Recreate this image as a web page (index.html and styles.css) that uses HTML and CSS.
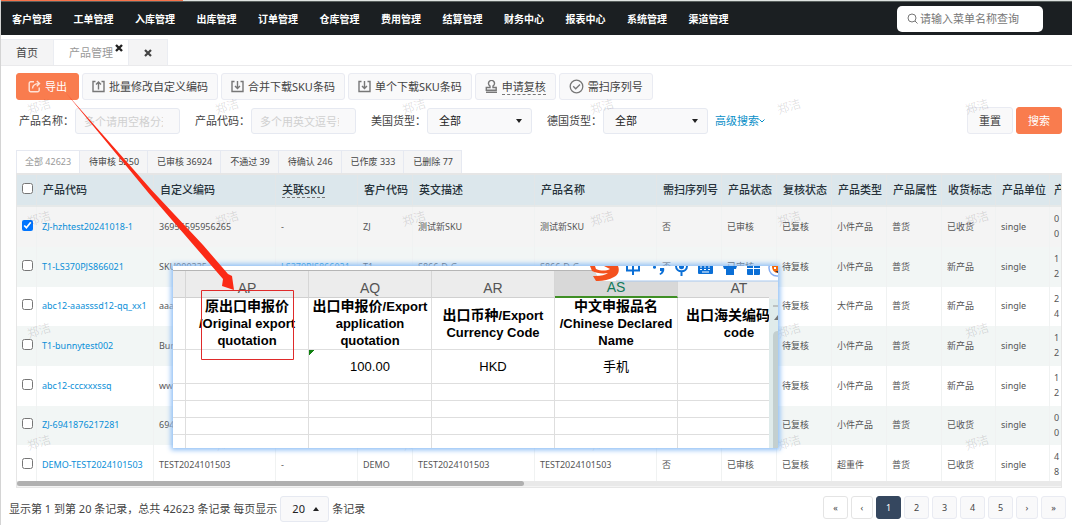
FILE: index.html
```html
<!DOCTYPE html>
<html lang="zh-CN">
<head>
<meta charset="utf-8">
<title>产品管理</title>
<link rel="stylesheet" href="styles.css">
</head>
<body>
<div class="page">
  <div class="progress"><div class="progress-bar"></div></div>
  <header class="topbar">
    <nav class="menu">
      <a href="#">客户管理</a><a href="#">工单管理</a><a href="#">入库管理</a><a href="#">出库管理</a><a href="#">订单管理</a><a href="#">仓库管理</a><a href="#">费用管理</a><a href="#">结算管理</a><a href="#">财务中心</a><a href="#">报表中心</a><a href="#">系统管理</a><a href="#">渠道管理</a>
    </nav>
    <label class="menu-search">
      <svg width="11" height="11" viewBox="0 0 11 11" fill="none" stroke="#777"><circle cx="5" cy="5" r="4"/><path d="M8 8l2.5 2.5"/></svg>
      <input type="text" placeholder="请输入菜单名称查询" aria-label="请输入菜单名称查询">
    </label>
  </header>

  <div class="tabs">
    <button class="tab">首页</button>
    <button class="tab tab-active">产品管理<svg class="tab-close" width="8" height="8" viewBox="0 0 8 8" stroke="#222" stroke-width="2.4"><path d="M1 1l6 6M7 1l-6 6"/></svg></button>
    <button class="tab" aria-label="close"><svg width="8" height="8" viewBox="0 0 8 8" stroke="#444" stroke-width="2.2"><path d="M1 1l6 6M7 1l-6 6"/></svg></button>
  </div>

  <main class="content">
    <div class="toolbar">
      <button class="btn btn-primary btn-export"><svg width="13" height="13" viewBox="0 0 13 13" fill="none" stroke="#ffe3d8" stroke-width="1.4"><path d="M6 1.7H2.7a1.5 1.5 0 0 0-1.5 1.5v7a1.5 1.5 0 0 0 1.5 1.5h7a1.5 1.5 0 0 0 1.5-1.5V7.5M4.5 8.5C4.7 5.5 6.5 3.6 11 3.6M8.8 1l2.7 2.6-2.7 2.6"/></svg>导出</button>
      <button class="btn"><svg width="13" height="13" viewBox="0 0 13 13" fill="none" stroke="#777" stroke-width="1.4"><path d="M3.5 1.5H1v10h11v-10H9.5M6.5 9.5V2M4 4.5L6.5 2 9 4.5"/></svg>批量修改自定义编码</button>
      <button class="btn"><svg width="13" height="13" viewBox="0 0 13 13" fill="none" stroke="#777" stroke-width="1.4"><path d="M3.5 1.5H1v10h11v-10H9.5M6.5 1v7.5M4 6l2.5 2.5L9 6"/></svg>合并下载SKU条码</button>
      <button class="btn"><svg width="13" height="13" viewBox="0 0 13 13" fill="none" stroke="#777" stroke-width="1.4"><path d="M3.5 1.5H1v10h11v-10H9.5M6.5 1v7.5M4 6l2.5 2.5L9 6"/></svg>单个下载SKU条码</button>
      <button class="btn"><svg width="13" height="13" viewBox="0 0 13 13" fill="none" stroke="#777" stroke-width="1.4"><path d="M5 7.5V6a3 3 0 1 1 3 0v1.5h3.200v2.700H1.300V7.500zM1 12.200h11"/></svg><span class="hinted">申请复核</span></button>
      <button class="btn"><svg width="15" height="15" viewBox="0 0 15 15" fill="none" stroke="#777" stroke-width="1.3"><circle cx="7.5" cy="7.5" r="6.3"/><path d="M4.200 7.300l2.500 2.500 4.300-4.300"/></svg>需扫序列号</button>
    </div>

    <form class="filters">
      <div class="field"><label for="pname">产品名称：</label><input id="pname" class="box" type="text" placeholder="多个请用空格分开"></div>
      <div class="field"><label for="pcode">产品代码：</label><input id="pcode" class="box" type="text" placeholder="多个用英文逗号或空格"></div>
      <div class="field"><label for="us">美国货型：</label><span class="picker"><select id="us" class="box"><option>全部</option></select></span></div>
      <div class="field"><label for="de">德国货型：</label><span class="picker"><select id="de" class="box"><option>全部</option></select></span></div>
      <a href="#" class="advanced">高级搜索<svg width="6" height="4" viewBox="0 0 6 4" fill="none" stroke="#0a8fc8"><path d="M.5.5L3 3 5.500.5"/></svg></a>
      <div class="actions"><button type="button" class="btn btn-text">重置</button><button type="button" class="btn btn-text btn-primary">搜索</button></div>
    </form>

    <div class="status-tabs">
      <button class="status on">全部 42623</button><button class="status">待审核 5250</button><button class="status">已审核 36924</button><button class="status">不通过 39</button><button class="status">待确认 246</button><button class="status">已作废 333</button><button class="status">已删除 77</button>
    </div>

    <div class="grid">
      <table class="products">
        <colgroup><col class="w-check"><col class="w-code"><col class="w-wide"><col class="w-sku"><col class="w-std"><col class="w-wide"><col class="w-wide"><col class="w-scan"><col class="w-std"><col class="w-std"><col class="w-std"><col class="w-std"><col class="w-unit"><col class="w-unit"><col class="w-last"></colgroup>
        <thead><tr><th><input type="checkbox" aria-label="全部"></th><th>产品代码</th><th>自定义编码</th><th><span class="hinted">关联SKU</span></th><th>客户代码</th><th>英文描述</th><th>产品名称</th><th>需扫序列号</th><th>产品状态</th><th>复核状态</th><th>产品类型</th><th>产品属性</th><th>收货标志</th><th>产品单位</th><th>产</th></tr></thead>
        <tbody>
          <tr class="picked"><td><input type="checkbox" checked aria-label="ZJ-hzhtest20241018-1"></td><td><a href="#">ZJ-hzhtest20241018-1</a></td><td>36955595956265</td><td>-</td><td>ZJ</td><td>测试新SKU</td><td>测试新SKU</td><td>否</td><td>已审核</td><td>已复核</td><td>小件产品</td><td>普货</td><td>已收货</td><td>single</td><td>0<br>0</td></tr>
          <tr><td><input type="checkbox" aria-label="T1-LS370PJS866021"></td><td><a href="#">T1-LS370PJS866021</a></td><td>SKU000335</td><td><a href="#">LS370PJS866021</a></td><td>T1</td><td>S866-D-G</td><td>S866-D-G</td><td>否</td><td>已审核</td><td>待复核</td><td>小件产品</td><td>普货</td><td>新产品</td><td>single</td><td>1<br>2</td></tr>
          <tr><td><input type="checkbox" aria-label="abc12-aaasssd12-qq_xx1"></td><td><a href="#">abc12-aaasssd12-qq_xx1</a></td><td>aaa</td><td></td><td></td><td></td><td></td><td></td><td></td><td>待复核</td><td>大件产品</td><td>普货</td><td>新产品</td><td>single</td><td>2<br>4</td></tr>
          <tr><td><input type="checkbox" aria-label="T1-bunnytest002"></td><td><a href="#">T1-bunnytest002</a></td><td>Bun</td><td></td><td></td><td></td><td></td><td></td><td></td><td>待复核</td><td>小件产品</td><td>普货</td><td>新产品</td><td>single</td><td>1<br>2</td></tr>
          <tr><td><input type="checkbox" aria-label="abc12-cccxxxssq"></td><td><a href="#">abc12-cccxxxssq</a></td><td>www</td><td></td><td></td><td></td><td></td><td></td><td></td><td>待复核</td><td>小件产品</td><td>普货</td><td>新产品</td><td>single</td><td>1<br>2</td></tr>
          <tr><td><input type="checkbox" aria-label="ZJ-6941876217281"></td><td><a href="#">ZJ-6941876217281</a></td><td>694</td><td></td><td></td><td></td><td></td><td></td><td></td><td>已复核</td><td>小件产品</td><td>普货</td><td>已收货</td><td>single</td><td>0<br>0</td></tr>
          <tr><td><input type="checkbox" aria-label="DEMO-TEST2024101503"></td><td><a href="#">DEMO-TEST2024101503</a></td><td>TEST2024101503</td><td>-</td><td>DEMO</td><td>TEST2024101503</td><td>TEST2024101503</td><td>否</td><td>已审核</td><td>已复核</td><td>超重件</td><td>普货</td><td>已收货</td><td>single</td><td>4<br>8</td></tr>
        </tbody>
      </table>
      <div class="scroll-track"><div class="scroll-thumb"></div></div>
    </div>

    <footer class="footer">
      <label for="size">显示第 1 到第 20 条记录，总共 42623 条记录 每页显示</label>
      <span class="picker picker-up"><select id="size" class="box"><option>20</option></select></span>
      <span>条记录</span>
      <nav class="pager">
        <button class="page-btn plain">«</button><button class="page-btn plain narrow">‹</button><button class="page-btn current">1</button><button class="page-btn">2</button><button class="page-btn">3</button><button class="page-btn">4</button><button class="page-btn">5</button><button class="page-btn narrow">›</button><button class="page-btn">»</button>
      </nav>
    </footer>
  </main>

  <div class="watermarks" aria-hidden="true">
    <span>郑洁</span><span>郑洁</span><span>郑洁</span><span>郑洁</span><span>郑洁</span><span>郑洁</span>
    <span>郑洁</span><span>郑洁</span><span>郑洁</span><span>郑洁</span><span>郑洁</span><span>郑洁</span>
    <span>郑洁</span><span>郑洁</span><span>郑洁</span><span>郑洁</span><span>郑洁</span><span>郑洁</span>
    <span>郑洁</span><span>郑洁</span><span>郑洁</span><span>郑洁</span><span>郑洁</span><span>郑洁</span>
  </div>

  <section class="sheet">
    <div class="sheet-top"></div>
    <div class="sheet-body">
      <div class="sheet-view">
        <table class="cells">
          <colgroup><col class="c-edge"><col class="c-col"><col class="c-col"><col class="c-col"><col class="c-col"><col class="c-col"></colgroup>
          <thead><tr><th></th><th>AP</th><th>AQ</th><th>AR</th><th class="sel">AS</th><th>AT</th></tr></thead>
          <tbody>
            <tr class="titles"><td></td><td><span class="zh">原出口申报价</span><br>/Original export quotation</td><td><span class="zh">出口申报价</span>/Export application quotation</td><td><span class="zh">出口币种</span>/Export Currency Code</td><td><span class="zh">中文申报品名</span><br>/Chinese Declared Name</td><td><span class="zh lead">出口海关编码</span>code</td></tr>
            <tr class="values"><td></td><td></td><td class="flag">100.00</td><td>HKD</td><td>手机</td><td></td></tr>
            <tr><td></td><td></td><td></td><td></td><td></td><td></td></tr>
            <tr><td></td><td></td><td></td><td></td><td></td><td></td></tr>
            <tr><td></td><td></td><td></td><td></td><td></td><td></td></tr>
            <tr><td></td><td></td><td></td><td></td><td></td><td></td></tr>
          </tbody>
        </table>
      </div>
      <div class="sheet-side"><svg width="9" height="150" viewBox="0 0 9 150"><path d="M4 7h5" stroke="#999"/><path d="M5 21l4-5v5z" fill="#777"/><path d="M4 150V37q0-5 5-5v118z" fill="#c3cfcf"/></svg></div>
    </div>
    <svg class="ime" width="190" height="17" viewBox="0 0 190 17">
      <path d="M4 0H190V15H12z" fill="#fff"/><path d="M28 15h162" stroke="#a8c8ee"/>
      <path d="M2 0h5l1 3c5 2 10 2 14 0l-6-3h14c2 5 0 9-4 11-5 3-13 4.500-18 4L5 10c7 .5 12-1 15-3-6 1-12 0-16-2z" fill="#f4511e"/>
      <g fill="none" stroke="#0b6fd6" stroke-width="2"><path d="M39 0v4.500h12V0M45 0v9"/><path d="M88 0c0 7 11 7 11 0M93.500 5v5"/></g>
      <g fill="#0b6fd6"><circle cx="66.500" cy="1.200" r="1.500"/><path d="M72 2h4c1 3-1 6-4 7l-.5-1.500c1.500-.5 2-1.500 2-2.500H72z"/><path d="M91 0h5v1c0 3-5 3-5 0z"/><path d="M110 0h15v7q0 1-1 1h-13q-1 0-1-1z"/><path d="M135 0h14l-1 3h-2v6h-8V3h-2z"/><path d="M159 0h6v2h-6zM166 0h6v2h-6zM159 3h6v6h-5q-1 0-1-1zM166 3h6v5q0 1-1 1h-5z"/></g>
      <path d="M112 1h2M116 1h2M120 1h2M112 3.500h2M116 3.500h2M120 3.500h2M114 6h7" stroke="#fff" stroke-width="1.200"/>
      <circle cx="189" cy="2" r="8" fill="#fff" stroke="#86aef2" stroke-width="1.500"/><path d="M184 0h6v7c-4 0-6-3-6-7z" fill="#f76707"/><path d="M186 1h2v2h-2z" fill="#fff"/><path d="M187 5h3v2z" fill="#334"/>
    </svg>
  </section>

  <svg class="callout" width="240" height="275" viewBox="0 0 240 275">
    <path d="M11 5L97 102.500 148 157 173 186 177 188 179 202 167 198 168 191 142 161 94 105.500z" fill="#fb2a16"/>
    <path d="M146.500 202.500h92v69h-92z" fill="none" stroke="#df2a2a"/>
  </svg>
</div>
</body>
</html>
```
FILE: styles.css
```css
* { box-sizing: border-box; }
body {
  margin: 0;
  background: #fff;
  color: #444;
  font: 11px/16px "Noto Sans", "Noto Sans CJK SC", sans-serif;
}
button, input, select { font: inherit; color: inherit; margin: 0; }
button { cursor: pointer; }
a { color: #0a8fd8; text-decoration: none; }
svg { display: block; flex: none; }

.page {
  position: relative;
  min-height: 100vh;
  border-left: 1px solid #d4d4d4;
  overflow: hidden;
}

.progress { height: 2px; background: #dfe3e1; border-bottom: 1px solid #59605e; }
.progress-bar { width: 17%; height: 1px; background: #f9734a; }

.topbar {
  display: flex;
  align-items: center;
  justify-content: space-between;
  height: 33px;
  padding: 0 29px 0 11px;
  background: #1b1f22;
}
.menu { display: flex; justify-content: space-between; width: 69.500%; }
.menu a { color: #fff; font-size: 10px; font-weight: 700; white-space: nowrap; }
.menu-search {
  display: flex;
  align-items: center;
  gap: 2px;
  width: 146px;
  height: 26px;
  padding: 0 10px;
  border-radius: 5px;
  background: #fff;
}
.menu-search input { flex: 1; min-width: 0; padding: 0; border: 0; outline: 0; background: none; }
.menu-search input::placeholder { color: #777; }

.tabs {
  display: flex;
  height: 27px;
  margin-top: 4px;
  border-bottom: 1px solid #eaeaec;
}
.tab {
  position: relative;
  display: flex;
  align-items: center;
  padding: 0 15px;
  border: 1px solid #ebedf2;
  border-left: 0;
  border-bottom: 0;
  background: #f4f4f5;
}
.tab-active { background: #fff; color: #999; }
.tab-close { position: absolute; top: 4px; right: 5px; }

.content { padding: 7px 10px 0 15px; }

.toolbar { display: flex; gap: 3px; }
.btn {
  display: flex;
  align-items: center;
  justify-content: center;
  gap: 4px;
  height: 27px;
  padding: 0 9px;
  border: 1px solid #e9ebf2;
  border-radius: 3px;
  background: #f9f9fa;
  white-space: nowrap;
}
.btn-text, .btn-export { padding: 0 11px; }
.btn-primary { border-color: #f97c4e; background: #f97c4e; color: #fff; }
.hinted { border-bottom: 1px dashed #777; line-height: 15px; }

.filters { display: flex; align-items: center; margin-top: 7px; padding-left: 3px; }
.field { display: flex; align-items: center; gap: 1px; margin-right: 15px; padding-top: 1px; }
.field:nth-child(4) { margin-right: 7px; }
.box {
  width: 105px;
  height: 26px;
  padding: 0 16px 0 8px;
  border: 1px solid #e6e9f1;
  border-radius: 3px;
  outline: 0;
  background: #f9f9fa;
}
.box::placeholder { color: #d0d0d0; }
.picker { position: relative; }
.picker .box { display: block; appearance: none; padding-left: 11px; color: #222; }
.picker::after {
  content: "";
  position: absolute;
  top: 11px;
  right: 10px;
  border: 3px solid transparent;
  border-top: 4px solid #222;
  border-bottom: 0;
  pointer-events: none;
}
.picker-up .box { width: 49px; }
.picker-up::after { border-top: 0; border-bottom: 4px solid #222; }
.advanced { display: flex; align-items: center; color: #0a8fc8; }
.actions { display: flex; gap: 3px; margin-left: auto; }

.status-tabs { display: flex; margin-top: 16px; }
.status {
  height: 23px;
  padding: 0 8px 0 9px;
  border: 1px solid #e6e9f1;
  border-left: 0;
  border-bottom: 0;
  background: #f5f5f6;
  font-size: 9px;
  white-space: nowrap;
}
.status.on { padding-left: 8px; border-left: 1px solid #e6e9f1; background: #fff; color: #999; }

.grid {
  display: flex;
  flex-direction: column;
  justify-content: space-between;
  height: 315px;
  border: 1px solid #e6e6e6;
  border-top-width: 2px;
  overflow: hidden;
}
.products {
  width: 1100px;
  margin-bottom: -20px;
  table-layout: fixed;
  border-collapse: separate;
  border-spacing: 0;
}
.w-check { width: 20px; }
.w-code { width: 117px; }
.w-wide { width: 122px; }
.w-sku { width: 82px; }
.w-scan { width: 65px; }
.w-std { width: 55px; }
.w-unit { width: 54px; }
.products th {
  height: 32px;
  padding: 0 0 0 6px;
  border-right: 1px solid #e3e6e7;
  border-bottom: 2px solid #e6e9e9;
  background: #dce7ec;
  color: #26323a;
  font-size: 11px;
  font-weight: 500;
  text-align: left;
  white-space: nowrap;
}
.products td {
  height: 40px;
  padding: 0 0 2px 5px;
  border-right: 1px solid #f0f2f2;
  color: #555;
  font-size: 9px;
  line-height: 15px;
  white-space: nowrap;
}
.products tbody tr:nth-child(3n) td { height: 39px; }
.products tbody tr:nth-child(even) { background: #f2f6f5; }
.products tbody .picked { background: #f4f4f4; }
.products th:first-child, .products td:first-child { padding: 0 0 4px 5px; }
.products th:last-child, .products td:last-child { padding-left: 4px; }
.products input { display: block; width: 11px; height: 11px; }
.scroll-track { position: relative; flex: none; height: 6px; background: #e9e9e9; border-bottom: 1px solid #f4f4f4; }
.scroll-thumb { width: 48.600%; height: 5px; border-radius: 3px; background: #b0b0b0; }

.footer { display: flex; align-items: center; gap: 3px; margin: 8px 0 0 -7px; }
.pager { display: flex; gap: 3px; margin: 0 -4px 3px auto; }
.page-btn {
  width: 25px;
  height: 23px;
  padding: 0;
  border: 1px solid #e9ebf2;
  border-radius: 3px;
  background: #f9f9fa;
  font-size: 9px;
  line-height: 12px;
}
.plain { background: #fff; border-color: #e4e4e4; }
.narrow { width: 22px; }
.current { border-color: #35475f; background: #35475f; color: #fff; }

.watermarks {
  position: absolute;
  inset: 94px 0 0 23px;
  display: grid;
  grid-template-columns: repeat(6, 17.900%);
  grid-auto-rows: 112px;
  pointer-events: none;
  overflow: hidden;
}
.watermarks span {
  justify-self: start;
  align-self: start;
  padding: 5px 3px;
  color: rgba(0, 0, 0, 0.13);
  font-size: 12px;
  transform: rotate(-18deg);
}

.sheet {
  position: absolute;
  left: 172px;
  top: 266px;
  width: 605px;
  height: 182px;
  background: #fff;
  box-shadow: 0 0 5px 2px #8dbef5;
  color: #000;
  font-family: "Liberation Sans", "Noto Sans CJK SC", sans-serif;
  font-size: 13px;
  line-height: 17px;
  overflow: hidden;
}
.sheet-top { height: 5px; border-bottom: 1px solid #b5b5b5; }
.sheet-body { display: flex; height: 177px; background: #ececec; }
.sheet-view { flex: 1; overflow: hidden; }
.sheet-side { margin-top: 28px; background: #dfebeb; }
.cells { width: 628px; table-layout: fixed; border-spacing: 0; background: #fff; }
.c-edge { width: 13px; }
.c-col { width: 123px; }
.cells th {
  height: 27px;
  padding: 8px 0 0;
  border-right: 1px solid #d6d6d6;
  border-bottom: 1px solid #d0d0d0;
  background: #ececec;
  color: #555;
  font-size: 14px;
  font-weight: 400;
}
.cells .sel { border-bottom: 2px solid #3f8f25; background: #d8d8d8; color: #147a5c; }
.cells td {
  height: 17px;
  padding: 0;
  border-right: 1px solid #dedede;
  border-bottom: 1px solid #dedede;
  text-align: center;
}
.cells .titles td { height: 51px; font-weight: 700; }
.cells .values td { height: 34px; }
.zh { font-size: 14px; }
.lead { display: block; padding-left: 8px; text-align: left; }
.flag { background: linear-gradient(135deg, #118011 4px, transparent 4px); }
.ime { position: absolute; top: 0; right: 0; }

.callout { position: absolute; left: 54px; top: 88px; pointer-events: none; }
```
